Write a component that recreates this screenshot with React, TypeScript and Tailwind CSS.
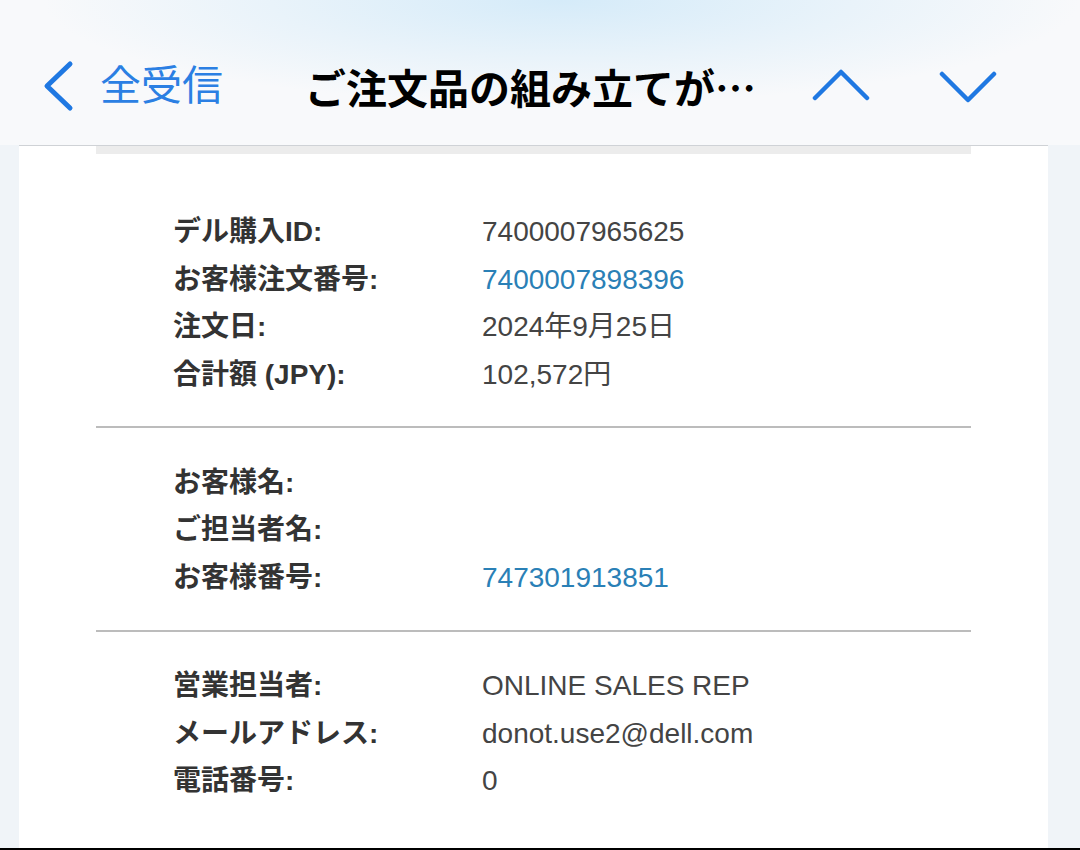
import React from "react";

const FONT = { fontFamily: '"Liberation Sans", "Noto Sans CJK JP", sans-serif' };
const CJK = { fontFamily: '"Noto Sans CJK JP", "Liberation Sans", sans-serif' };

type Row = { label: string; value: string; link?: boolean };

const sections: Row[][] = [
  [
    { label: "デル購入ID:", value: "7400007965625" },
    { label: "お客様注文番号:", value: "7400007898396", link: true },
    { label: "注文日:", value: "2024年9月25日" },
    { label: "合計額 (JPY):", value: "102,572円" },
  ],
  [
    { label: "お客様名:", value: "" },
    { label: "ご担当者名:", value: "" },
    { label: "お客様番号:", value: "747301913851", link: true },
  ],
  [
    { label: "営業担当者:", value: "ONLINE SALES REP" },
    { label: "メールアドレス:", value: "donot.use2@dell.com" },
    { label: "電話番号:", value: "0" },
  ],
];

function Section({ rows }: { rows: Row[] }) {
  return (
    <div className="flex flex-col pl-[77px]">
      {rows.map((r, i) => (
        <div key={i} className="flex h-[47.7px] items-center text-[28px] leading-[47.7px]">
          <div className="w-[309px] font-bold text-[#333333]">{r.label}</div>
          <div className={r.link ? "text-[#2a80b6]" : "text-[#444444]"}>{r.value}</div>
        </div>
      ))}
    </div>
  );
}

export default function App() {
  return (
    <div
      className="relative flex h-[850px] w-[1080px] flex-col overflow-hidden bg-[#f0f4f8]"
      style={FONT}
    >
      <header className="flex h-[145px] shrink-0 items-center bg-[radial-gradient(ellipse_60%_90%_at_52%_0%,#d5ebf9_0%,#e9f3fa_45%,#f8f9fb_80%)] pt-[27px]">
        <svg width="34" height="52" viewBox="0 0 34 52" className="ml-[40px]">
          <path d="M30 4 L7 26 L30 48" fill="none" stroke="#1f78e2" strokeWidth="5" strokeLinecap="round" strokeLinejoin="round" />
        </svg>
        <div className="ml-[26px] w-[205px] text-[41px] leading-none text-[#2b7fe3]">全受信</div>
        <div
          className="w-[506px] whitespace-nowrap text-[41px] font-bold leading-none text-black"
          style={CJK}
        >
          ご注文品の組み立てが…
        </div>
        <svg width="60" height="34" viewBox="0 0 60 34">
          <path d="M4 29 L30 3 L56 29" fill="none" stroke="#1f78e2" strokeWidth="4.5" strokeLinecap="round" strokeLinejoin="round" />
        </svg>
        <svg width="60" height="34" viewBox="0 0 60 34" className="ml-[67px]">
          <path d="M4 5 L30 31 L56 5" fill="none" stroke="#1f78e2" strokeWidth="4.5" strokeLinecap="round" strokeLinejoin="round" />
        </svg>
      </header>
      <div className="ml-[19px] mr-[32px] h-px shrink-0 bg-[#cfd2d6]" />
      <main className="ml-[19px] mr-[32px] flex flex-1 flex-col bg-white px-[77px]">
        <div className="h-[8px] bg-[#ececec]" />
        <div className="mt-[54px]">
          <Section rows={sections[0]} />
        </div>
        <div className="mt-[27px] h-[2px] bg-[#bcbcbc]" />
        <div className="mt-[31px]">
          <Section rows={sections[1]} />
        </div>
        <div className="mt-[28px] h-[2px] bg-[#bcbcbc]" />
        <div className="mt-[30px]">
          <Section rows={sections[2]} />
        </div>
      </main>
      <div className="h-[2px] shrink-0 bg-black" />
    </div>
  );
}
